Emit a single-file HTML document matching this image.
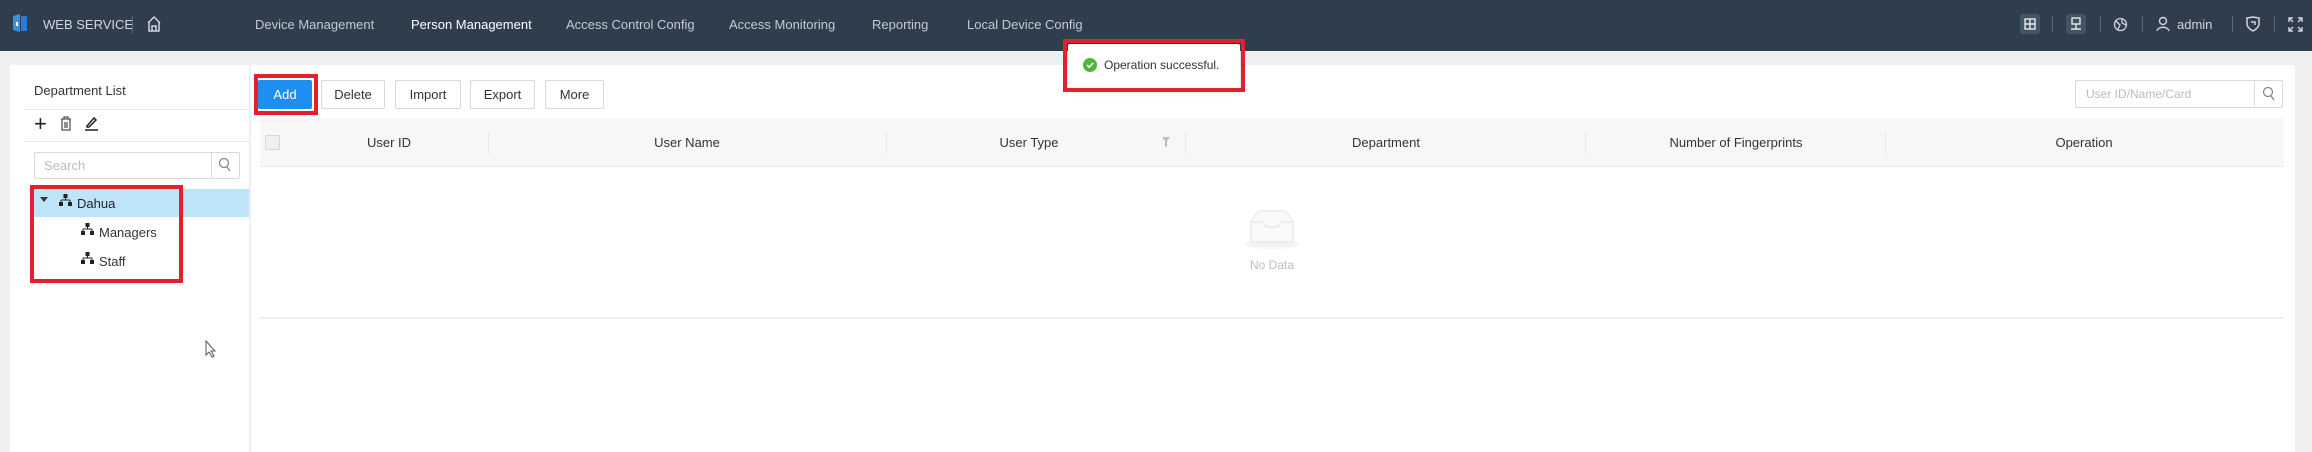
<!DOCTYPE html>
<html><head><meta charset="utf-8"><style>
*{margin:0;padding:0;box-sizing:border-box}
body{width:2312px;height:452px;overflow:hidden;background:#eef0f2;font-family:"Liberation Sans",sans-serif;font-size:13px;color:#333;position:relative}
.a{position:absolute}
.hdr{left:0;top:0;width:2312px;height:51px;background:#2f3d4d}
.nav{top:17px;color:#c3cad2;font-size:13px;white-space:nowrap}
.btn{top:80px;height:29px;border:1px solid #d9d9d9;border-radius:2px;background:#fff;text-align:center;line-height:27px;font-size:13px;color:#333}
.th{top:135px;font-size:13px;color:#333;transform:translateX(-50%);white-space:nowrap}
.dv{top:132px;width:1px;height:22px;background:#e6e6e6}
.red{border:4px solid #e5202e}
</style></head><body>
<div class="a hdr"></div>
<svg class="a" style="left:11px;top:13px" width="18" height="20" viewBox="0 0 18 20"><path d="M2 3 L9 1 L9 19 L2 17Z" fill="#3b8fe0"/><rect x="10" y="3" width="6" height="15" fill="#2b7bd6"/><rect x="5" y="9" width="2" height="4" fill="#fff"/></svg>
<div class="a nav" style="left:43px;color:#d0d6dc">WEB SERVICE</div>
<div class="a" style="left:132px;top:16px;width:1px;height:18px;background:#5a6775"></div>
<svg class="a" style="left:146px;top:15px" width="16" height="18" viewBox="0 0 16 18" fill="none" stroke="#d0d6dc" stroke-width="1.5"><path d="M2 8 L8 2 L14 8 M3 7 V16 H13 V7 M6 16 V11 H10 V16"/></svg>
<div class="a nav" style="left:255px">Device Management</div>
<div class="a nav" style="left:411px;color:#fff">Person Management</div>
<div class="a nav" style="left:566px">Access Control Config</div>
<div class="a nav" style="left:729px">Access Monitoring</div>
<div class="a nav" style="left:872px">Reporting</div>
<div class="a nav" style="left:967px">Local Device Config</div>
<div class="a" style="left:2020px;top:14px;width:20px;height:20px;background:#465566;border-radius:3px"></div>
<svg class="a" style="left:2024px;top:18px" width="12" height="12" viewBox="0 0 12 12" fill="none" stroke="#e6eaee" stroke-width="1.4"><rect x="1" y="1" width="10" height="10"/><path d="M6 1V11M1 6H11"/></svg>
<div class="a" style="left:2052px;top:16px;width:1px;height:16px;background:#5a6775"></div>
<div class="a" style="left:2066px;top:14px;width:20px;height:20px;background:#465566;border-radius:3px"></div>
<svg class="a" style="left:2070px;top:17px" width="12" height="14" viewBox="0 0 12 14" fill="none" stroke="#e6eaee" stroke-width="1.4"><rect x="2" y="1" width="8" height="6"/><path d="M1 12H11M6 7V12"/></svg>
<div class="a" style="left:2100px;top:16px;width:1px;height:16px;background:#5a6775"></div>
<svg class="a" style="left:2113px;top:17px" width="15" height="15" viewBox="0 0 15 15" fill="none" stroke="#d0d6dc" stroke-width="1.3"><circle cx="7.5" cy="7.5" r="6"/><path d="M3 4 L7 8 L5 12 M9 2 L9 6 L13 8"/></svg>
<div class="a" style="left:2142px;top:16px;width:1px;height:16px;background:#5a6775"></div>
<svg class="a" style="left:2156px;top:16px" width="14" height="16" viewBox="0 0 14 16" fill="none" stroke="#d0d6dc" stroke-width="1.4"><circle cx="7" cy="5" r="3.5"/><path d="M1 15 C2 10 12 10 13 15"/></svg>
<div class="a nav" style="left:2177px;color:#d0d6dc">admin</div>
<div class="a" style="left:2232px;top:16px;width:1px;height:16px;background:#5a6775"></div>
<svg class="a" style="left:2246px;top:16px" width="14" height="16" viewBox="0 0 14 16" fill="none" stroke="#d0d6dc" stroke-width="1.5"><path d="M1 2 L7 1 L13 2 V8 C13 12 7 15 7 15 C7 15 1 12 1 8Z M5 6H9V9"/></svg>
<div class="a" style="left:2274px;top:16px;width:1px;height:16px;background:#5a6775"></div>
<svg class="a" style="left:2288px;top:17px" width="15" height="15" viewBox="0 0 15 15" fill="none" stroke="#d0d6dc" stroke-width="1.4"><path d="M1 5V1H5M10 1H14V5M14 10V14H10M5 14H1V10M1 1L5 5M14 1L10 5M14 14L10 10M1 14L5 10"/></svg>

<!-- left panel -->
<div class="a" style="left:10px;top:65px;width:239px;height:387px;background:#fff"></div>
<div class="a" style="left:249px;top:65px;width:1px;height:387px;background:#ececec"></div>
<div class="a" style="left:34px;top:83px;font-size:13px">Department List</div>
<div class="a" style="left:24px;top:109px;width:226px;height:1px;background:#e8e8e8"></div>
<div class="a" style="left:34px;top:113px;font-size:22px;line-height:22px;color:#222">+</div>
<svg class="a" style="left:60px;top:116px" width="12" height="15" viewBox="0 0 12 15" fill="none" stroke="#555" stroke-width="1.3"><path d="M1 3H11M4 3V1H8V3M2 3V14H10V3M5 6V12M7 6V12"/></svg>
<svg class="a" style="left:84px;top:115px" width="15" height="16" viewBox="0 0 15 16" fill="none" stroke="#222" stroke-width="1.5"><path d="M3 11 L10 3 L12 5 L5 12 L3 12Z M1 15H14"/></svg>
<div class="a" style="left:24px;top:141px;width:226px;height:1px;background:#e8e8e8"></div>
<div class="a" style="left:34px;top:152px;width:206px;height:27px;border:1px solid #d9d9d9;border-radius:2px"></div>
<div class="a" style="left:211px;top:152px;width:1px;height:27px;background:#d9d9d9"></div>
<div class="a" style="left:44px;top:158px;color:#bbb">Search</div>
<svg class="a" style="left:218px;top:157px" width="14" height="16" viewBox="0 0 14 16" fill="none" stroke="#888" stroke-width="1.3"><circle cx="6" cy="6" r="4.5"/><path d="M9 10 L12 14"/></svg>
<div class="a" style="left:30px;top:189px;width:219px;height:28px;background:#bde4f8"></div>
<div class="a" style="left:40px;top:197px;width:0;height:0;border-left:4px solid transparent;border-right:4px solid transparent;border-top:5px solid #333"></div>
<svg class="a" style="left:59px;top:194px" width="13" height="13" viewBox="0 0 13 13" fill="#222"><rect x="4.5" y="0" width="4" height="4"/><path d="M6.5 4V6M2 6H11M2 6V8M11 6V8" stroke="#222" fill="none"/><rect x="0" y="8" width="4" height="4"/><rect x="9" y="8" width="4" height="4"/></svg>
<div class="a" style="left:77px;top:196px;color:#222">Dahua</div>
<svg class="a" style="left:81px;top:223px" width="13" height="13" viewBox="0 0 13 13" fill="#222"><rect x="4.5" y="0" width="4" height="4"/><path d="M6.5 4V6M2 6H11M2 6V8M11 6V8" stroke="#222" fill="none"/><rect x="0" y="8" width="4" height="4"/><rect x="9" y="8" width="4" height="4"/></svg>
<div class="a" style="left:99px;top:225px;color:#333">Managers</div>
<svg class="a" style="left:81px;top:252px" width="13" height="13" viewBox="0 0 13 13" fill="#222"><rect x="4.5" y="0" width="4" height="4"/><path d="M6.5 4V6M2 6H11M2 6V8M11 6V8" stroke="#222" fill="none"/><rect x="0" y="8" width="4" height="4"/><rect x="9" y="8" width="4" height="4"/></svg>
<div class="a" style="left:99px;top:254px;color:#333">Staff</div>
<div class="a red" style="left:30px;top:185px;width:153px;height:98px"></div>
<svg class="a" style="left:205px;top:340px" width="11" height="18" viewBox="0 0 11 18"><path d="M1 1 L1 15 L4 12 L7 17 L9 16 L6 11 L10 11Z" fill="#fff" stroke="#555" stroke-width="1"/></svg>

<!-- main panel -->
<div class="a" style="left:251px;top:65px;width:2044px;height:387px;background:#fff"></div>
<div class="a btn" style="left:258px;width:54px;background:#1e8ff0;border-color:#1e8ff0;color:#fff">Add</div>
<div class="a red" style="left:254px;top:74px;width:64px;height:41px"></div>
<div class="a btn" style="left:321px;width:64px">Delete</div>
<div class="a btn" style="left:395px;width:66px">Import</div>
<div class="a btn" style="left:470px;width:65px">Export</div>
<div class="a btn" style="left:545px;width:59px">More</div>
<div class="a" style="left:2075px;top:80px;width:208px;height:28px;border:1px solid #d9d9d9;border-radius:2px"></div>
<div class="a" style="left:2254px;top:80px;width:1px;height:28px;background:#d9d9d9"></div>
<div class="a" style="left:2086px;top:87px;color:#bbb;font-size:12px">User ID/Name/Card</div>
<svg class="a" style="left:2262px;top:86px" width="14" height="16" viewBox="0 0 14 16" fill="none" stroke="#888" stroke-width="1.3"><circle cx="6" cy="6" r="4.5"/><path d="M9 10 L12 14"/></svg>

<div class="a" style="left:260px;top:118px;width:2024px;height:49px;background:#f7f7f7;border-bottom:1px solid #e8e8e8"></div>
<div class="a" style="left:265px;top:135px;width:15px;height:15px;border:1px solid #d6d6d6;border-radius:2px;background:#f0f0f0"></div>
<div class="a th" style="left:389px">User ID</div>
<div class="a dv" style="left:488px"></div>
<div class="a th" style="left:687px">User Name</div>
<div class="a dv" style="left:886px"></div>
<div class="a th" style="left:1029px">User Type</div>
<svg class="a" style="left:1162px;top:137px" width="8" height="10" viewBox="0 0 8 10"><path d="M0 0H8L5 4V10L3 9V4Z" fill="#bbb"/></svg>
<div class="a dv" style="left:1185px"></div>
<div class="a th" style="left:1386px">Department</div>
<div class="a dv" style="left:1585px"></div>
<div class="a th" style="left:1736px">Number of Fingerprints</div>
<div class="a dv" style="left:1885px"></div>
<div class="a th" style="left:2084px">Operation</div>
<svg class="a" style="left:1244px;top:208px" width="56" height="42" viewBox="0 0 56 42"><ellipse cx="28" cy="36" rx="27" ry="5" fill="#f3f3f3"/><path d="M7 14 L14 3 H42 L49 14 V34 H7Z" fill="#fafafa" stroke="#e3e3e3"/><path d="M7 14 H20 C20 18 22 19 24 19 H32 C34 19 36 18 36 14 H49" fill="none" stroke="#e3e3e3"/></svg>
<div class="a" style="left:1272px;top:258px;transform:translateX(-50%);color:#bfbfbf;font-size:12px">No Data</div>
<div class="a" style="left:259px;top:317px;width:2025px;height:2px;background:#f0f0f0"></div>

<!-- toast -->
<div class="a" style="left:1068px;top:44px;width:172px;height:44px;background:#fff;box-shadow:0 2px 8px rgba(0,0,0,.18);border-radius:2px"></div>
<svg class="a" style="left:1083px;top:58px" width="14" height="14" viewBox="0 0 14 14"><circle cx="7" cy="7" r="7" fill="#4fb83a"/><path d="M4 7 L6.2 9.2 L10 5" stroke="#fff" stroke-width="1.5" fill="none"/></svg>
<div class="a" style="left:1104px;top:58px;font-size:12px;color:#333">Operation successful.</div>
<div class="a red" style="left:1063px;top:39px;width:182px;height:53px"></div>
</body></html>
